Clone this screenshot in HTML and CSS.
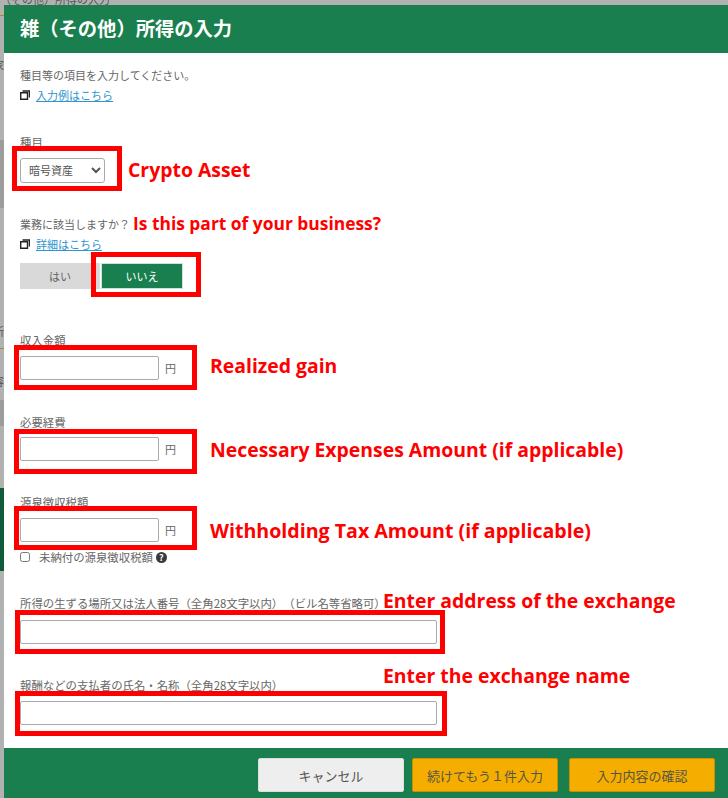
FILE: index.html
```html
<!DOCTYPE html>
<html lang="ja">
<head>
    <meta charset="UTF-8">
    <meta name="viewport" content="width=device-width, initial-scale=1.0">
    <title>雑（その他）所得の入力</title>
    <link rel="stylesheet" href="styles.css">
</head>
<body>
    <!-- page behind the dialog -->
    <div class="backdrop">
        <div class="back-title">（その他）所得の入力</div>
        <div class="back-rule back-rule-top"></div>
        <div class="back-patch back-patch-a"></div>
        <div class="back-patch back-patch-b"></div>
        <div class="back-green"></div>
        <div class="back-char back-char-a">家</div>
        <div class="back-char back-char-b">所</div>
        <div class="back-char back-char-c">容</div>
        <div class="back-rule back-rule-mid"></div>
    </div>

    <div class="dialog">
        <header class="dialog-head">雑（その他）所得の入力</header>

        <main class="dialog-body">
            <p class="text">種目等の項目を入力してください。</p>
            <p class="text link-row">
                <svg class="win-icon" viewBox="0 0 10 10"><path d="M2.5 1h7v6.5M.7 2.8h6.8v6.4H.7z" fill="none" stroke="#222" stroke-width="1.4"/></svg>
                <a href="#">入力例はこちら</a>
            </p>

            <div class="field field-kind">
                <label class="text label">種目</label>
                <select class="select"><option>暗号資産</option></select>
            </div>

            <div class="field">
                <p class="text">業務に該当しますか？</p>
                <p class="text link-row">
                    <svg class="win-icon" viewBox="0 0 10 10"><path d="M2.5 1h7v6.5M.7 2.8h6.8v6.4H.7z" fill="none" stroke="#222" stroke-width="1.4"/></svg>
                    <a href="#">詳細はこちら</a>
                </p>
                <div class="toggle">
                    <button class="toggle-btn">はい</button>
                    <button class="toggle-btn is-on">いいえ</button>
                </div>
            </div>

            <div class="field field-income">
                <label class="text label">収入金額</label>
                <div class="money"><input class="input input-money" type="text"><span class="text">円</span></div>
            </div>

            <div class="field field-tight">
                <label class="text label label-close">必要経費</label>
                <div class="money"><input class="input input-money" type="text"><span class="text">円</span></div>
            </div>

            <div class="field">
                <label class="text label">源泉徴収税額</label>
                <div class="money"><input class="input input-money" type="text"><span class="text">円</span></div>
                <div class="text check-row">
                    <input class="check" type="checkbox">
                    <span>未納付の源泉徴収税額</span>
                    <span class="help">?</span>
                </div>
            </div>

            <div class="field field-place">
                <label class="text label label-wide">所得の生ずる場所又は法人番号（全角28文字以内）（ビル名等省略可）</label>
                <input class="input input-long" type="text">
            </div>

            <div class="field">
                <label class="text label">報酬などの支払者の氏名・名称（全角28文字以内）</label>
                <input class="input input-long" type="text">
            </div>
        </main>

        <footer class="dialog-foot">
            <button class="foot-btn foot-cancel">キャンセル</button>
            <button class="foot-btn foot-next">続けてもう１件入力</button>
            <button class="foot-btn foot-ok">入力内容の確認</button>
        </footer>
    </div>

    <!-- red markup drawn on top of the screenshot -->
    <div class="mark mark-1"></div>
    <div class="mark mark-2"></div>
    <div class="mark mark-3"></div>
    <div class="mark mark-4"></div>
    <div class="mark mark-5"></div>
    <div class="mark mark-6"></div>
    <div class="mark mark-7"></div>

    <div class="note note-1">Crypto Asset</div>
    <div class="note note-2">Is this part of your business?</div>
    <div class="note note-3">Realized gain</div>
    <div class="note note-4">Necessary Expenses Amount (if applicable)</div>
    <div class="note note-5">Withholding Tax Amount (if applicable)</div>
    <div class="note note-6">Enter address of the exchange</div>
    <div class="note note-7">Enter the exchange name</div>
</body>
</html>
```

FILE: styles.css
```css
* {
    box-sizing: border-box;
}
html, body {
    margin: 0;
    height: 798px;
    overflow: hidden;
}
body {
    position: relative;
    background-color: #b1b1b1;
    font-family: "Noto Sans CJK JP", "Liberation Sans", sans-serif;
    text-spacing-trim: space-all;
}

/* page behind the dialog */
.backdrop {
    position: absolute;
    inset: 0;
    overflow: hidden;
    color: #555;
    font-size: 11px;
}
.back-title {
    position: absolute;
    top: -9px;
    left: 0;
    line-height: 16px;
}
.back-rule {
    position: absolute;
    left: 0;
    width: 4px;
    height: 1px;
    background-color: #b08a20;
}
.back-rule-top { top: 15px; }
.back-rule-mid { top: 348px; }
.back-patch {
    position: absolute;
    left: 0;
    width: 4px;
    background-color: #9c9c9c;
}
.back-patch-a { top: 140px; height: 68px; }
.back-patch-b { top: 400px; height: 26px; }
.back-green {
    position: absolute;
    top: 488px;
    left: 0;
    width: 4px;
    height: 83px;
    background-color: #0f5a38;
}
.back-char {
    position: absolute;
    left: -7px;
    line-height: 14px;
}
.back-char-a { top: 58px; }
.back-char-b { top: 324px; }
.back-char-c { top: 374px; }

/* dialog */
.dialog {
    position: relative;
    display: flex;
    flex-direction: column;
    height: 793px;
    margin: 5px 0 0 4px;
    background-color: #fff;
}
.dialog-head {
    height: 48px;
    padding-left: 16px;
    background-color: #1a7f4e;
    color: #fff;
    font-size: 19.3px;
    font-weight: 700;
    line-height: 46px;
}
.dialog-body {
    flex: 1;
    padding: 14px 0 0 16px;
}
.dialog-foot {
    display: flex;
    height: 50px;
    padding: 10px 13px 0 254px;
    background-color: #1a7f4e;
}

.text {
    margin: 0;
    color: #666;
    font-size: 11px;
    line-height: 16px;
}
.link-row {
    display: flex;
    align-items: center;
    gap: 6px;
    margin-top: 4px;
}
.link-row a {
    color: #2f94d0;
}
.win-icon {
    width: 10px;
    height: 10px;
}

.field {
    margin-top: 33px;
}
.field-kind {
    margin-top: 31px;
}
.field-income {
    margin-top: 43px;
}
.field-tight {
    margin-top: 34px;
}
.field-place {
    margin-top: 30px;
}
.label {
    display: block;
    margin-bottom: 8px;
    font-size: 11.4px;
    white-space: nowrap;
}
.label-close {
    margin-bottom: 7px;
}
.label-wide {
    margin-bottom: 9px;
}

.select {
    display: block;
    width: 85px;
    height: 25px;
    padding: 0 3px 2px 4px;
    border: 1px solid #aaa;
    border-radius: 3px;
    background-color: #fff;
    color: #555;
    font-family: inherit;
    font-size: 11px;
}

.toggle {
    display: flex;
    gap: 1px;
    margin-top: 11px;
}
.toggle-btn {
    width: 80px;
    height: 26px;
    padding: 0;
    border: none;
    background-color: #d9d9d9;
    color: #666;
    font-family: inherit;
    font-size: 11px;
}
.toggle-btn.is-on {
    width: 82px;
    border: 1px solid #cfe3d8;
    background-color: #1a7f4e;
    color: #fff;
}

.money {
    display: flex;
    align-items: center;
    gap: 6px;
}
.input {
    display: block;
    height: 24px;
    border: 1px solid #aaa;
    border-radius: 2px;
    background-color: #fff;
}
.input-money {
    width: 139px;
}
.input-long {
    width: 417px;
}

.check-row {
    display: flex;
    align-items: center;
    margin-top: 7px;
    font-size: 11.4px;
}
.check {
    width: 10px;
    height: 10px;
    margin: 0 9px 0 0;
}
.help {
    width: 11px;
    height: 11px;
    margin-left: 3px;
    border-radius: 50%;
    background-color: #3a3a3a;
    color: #fff;
    font-size: 9px;
    font-weight: 700;
    line-height: 11px;
    text-align: center;
}

.foot-btn {
    width: 146px;
    height: 34px;
    padding: 0;
    border: 1px solid #c98f00;
    border-radius: 2px;
    background-color: #f5ae00;
    color: #554;
    font-family: inherit;
    font-size: 13px;
}
.foot-cancel {
    border-color: #ddd;
    background-color: #eee;
    color: #555;
}
.foot-next {
    margin-left: 8px;
}
.foot-ok {
    margin-left: 11px;
}

/* red markup */
.mark {
    position: absolute;
    border: 5px solid #f00;
}
.mark-1 { top: 146px; left: 12px; width: 110px; height: 45px; }
.mark-2 { top: 252px; left: 91px; width: 110px; height: 45px; }
.mark-3 { top: 345px; left: 14px; width: 183px; height: 45px; }
.mark-4 { top: 429px; left: 14px; width: 183px; height: 45px; }
.mark-5 { top: 506px; left: 14px; width: 183px; height: 44px; }
.mark-6 { top: 610px; left: 15px; width: 430px; height: 44px; }
.mark-7 { top: 691px; left: 15px; width: 432px; height: 45px; }

.note {
    position: absolute;
    color: #f00;
    font-family: "Open Sans", "Liberation Sans", sans-serif;
    font-size: 19.4px;
    font-weight: 700;
    line-height: 26px;
    white-space: nowrap;
}
.note-1 { top: 157px; left: 128px; }
.note-2 { top: 210px; left: 133px; font-size: 17.4px; }
.note-3 { top: 353px; left: 210px; }
.note-4 { top: 437px; left: 210px; }
.note-5 { top: 518px; left: 210px; font-size: 19.6px; }
.note-6 { top: 588px; left: 383px; }
.note-7 { top: 663px; left: 383px; }
```
